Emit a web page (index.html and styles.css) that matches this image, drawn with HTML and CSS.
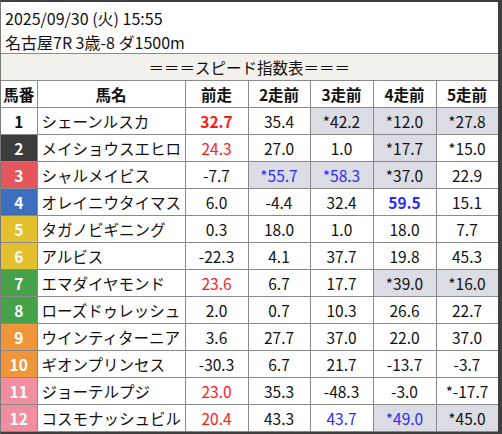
FILE: index.html
```html
<!DOCTYPE html>
<html lang="ja">
<head>
<meta charset="utf-8">
<title>スピード指数表</title>
<link rel="stylesheet" href="styles.css">
</head>
<body>
<div class="frame">
  <div class="info">
    <div class="line">2025/09/30 (火) 15:55</div>
    <div class="line">名古屋7R 3歳-8 ダ1500m</div>
  </div>
  <table class="speed">
    <colgroup>
      <col class="c-no"><col class="c-name"><col class="c-v1"><col class="c-v2"><col class="c-v3"><col class="c-v4"><col class="c-v5">
    </colgroup>
    <tr class="title-row"><td colspan="7" class="title">＝＝＝スピード指数表＝＝＝</td></tr>
    <tr class="head-row">
      <th>馬番</th><th>馬名</th><th>前走</th><th>2走前</th><th>3走前</th><th>4走前</th><th>5走前</th>
    </tr>
    <tr>
      <td class="no w1">1</td><td class="name">シェーンルスカ</td>
      <td class="red bold">32.7</td><td>35.4</td><td class="hl">*42.2</td><td class="hl">*12.0</td><td class="hl">*27.8</td>
    </tr>
    <tr>
      <td class="no w2">2</td><td class="name">メイショウスエヒロ</td>
      <td class="red">24.3</td><td>27.0</td><td>1.0</td><td class="hl">*17.7</td><td>*15.0</td>
    </tr>
    <tr>
      <td class="no w3">3</td><td class="name">シャルメイビス</td>
      <td>-7.7</td><td class="hl blue">*55.7</td><td class="hl blue">*58.3</td><td class="hl">*37.0</td><td>22.9</td>
    </tr>
    <tr>
      <td class="no w4">4</td><td class="name">オレイニウタイマス</td>
      <td>6.0</td><td>-4.4</td><td>32.4</td><td class="blue bold">59.5</td><td>15.1</td>
    </tr>
    <tr>
      <td class="no w5">5</td><td class="name">タガノビギニング</td>
      <td>0.3</td><td>18.0</td><td>1.0</td><td>18.0</td><td>7.7</td>
    </tr>
    <tr>
      <td class="no w5">6</td><td class="name">アルビス</td>
      <td>-22.3</td><td>4.1</td><td>37.7</td><td>19.8</td><td>45.3</td>
    </tr>
    <tr>
      <td class="no w7">7</td><td class="name">エマダイヤモンド</td>
      <td class="red">23.6</td><td>6.7</td><td>17.7</td><td class="hl">*39.0</td><td class="hl">*16.0</td>
    </tr>
    <tr>
      <td class="no w7">8</td><td class="name">ローズドゥレッシュ</td>
      <td>2.0</td><td>0.7</td><td>10.3</td><td>26.6</td><td>22.7</td>
    </tr>
    <tr>
      <td class="no w9">9</td><td class="name">ウインティターニア</td>
      <td>3.6</td><td>27.7</td><td>37.0</td><td>22.0</td><td>37.0</td>
    </tr>
    <tr>
      <td class="no w9">10</td><td class="name">ギオンプリンセス</td>
      <td>-30.3</td><td>6.7</td><td>21.7</td><td>-13.7</td><td>-3.7</td>
    </tr>
    <tr>
      <td class="no w11">11</td><td class="name">ジョーテルプジ</td>
      <td class="red">23.0</td><td>35.3</td><td>-48.3</td><td>-3.0</td><td>*-17.7</td>
    </tr>
    <tr>
      <td class="no w11">12</td><td class="name">コスモナッシュビル</td>
      <td class="red">20.4</td><td>43.3</td><td class="blue">43.7</td><td class="hl blue">*49.0</td><td class="hl">*45.0</td>
    </tr>
  </table>
</div>
</body>
</html>
```

FILE: styles.css
```css
html, body {
  margin: 0;
  padding: 0;
  background: #ffffff;
}

body {
  font-family: "Liberation Sans Narrow", "Noto Sans CJK JP", sans-serif;
  color: #111111;
}

.frame {
  width: 502px;
  height: 434px;
  box-sizing: border-box;
  border-top: 2px solid #3e3e3e;
  border-right: 4px solid #3e3e3e;
  border-bottom: 2px solid #3e3e3e;
  border-left: 1px solid #7a7a7a;
  background: #ffffff;
  overflow: hidden;
}

.info {
  height: 51px;
  box-sizing: border-box;
  padding: 4px 0 0 4px;
  font-size: 16px;
  line-height: 24px;
}

.speed {
  width: 497px;
  border-collapse: collapse;
  table-layout: fixed;
  font-size: 15.5px;
}

.c-no { width: 36px; }
.c-name { width: 148px; }
.c-v1 { width: 63px; }
.c-v2 { width: 62px; }
.c-v3 { width: 63px; }
.c-v4 { width: 63px; }
.c-v5 { width: 62px; }

.speed td, .speed th {
  border: 1px solid #8a8a8a;
  padding: 0;
  text-align: center;
  vertical-align: middle;
  white-space: nowrap;
  overflow: hidden;
}

.speed tr > :first-child {
  border-left: none;
}

.title-row td {
  height: 25px;
  background: #f2f1ec;
  line-height: 25px;
}

.head-row th {
  height: 26px;
  font-weight: bold;
  line-height: 26px;
}

.speed td {
  height: 26px;
  line-height: 26px;
}

.speed td.name {
  text-align: left;
  padding-left: 4px;
}

.no {
  font-weight: bold;
  color: #ffffff;
}

.w1 { background: #ffffff; color: #111111; }
.w2 { background: #3c3c3c; }
.w3 { background: #e4565b; }
.w4 { background: #3d6dbd; }
.w5 { background: #e3c02e; }
.w7 { background: #45a24a; }
.w9 { background: #ef963b; }
.w11 { background: #ef8fa0; }

.hl { background: #dcdce4; }
.red { color: #ff1a1a; }
.blue { color: #2a2aff; }
.bold { font-weight: bold; }
```
